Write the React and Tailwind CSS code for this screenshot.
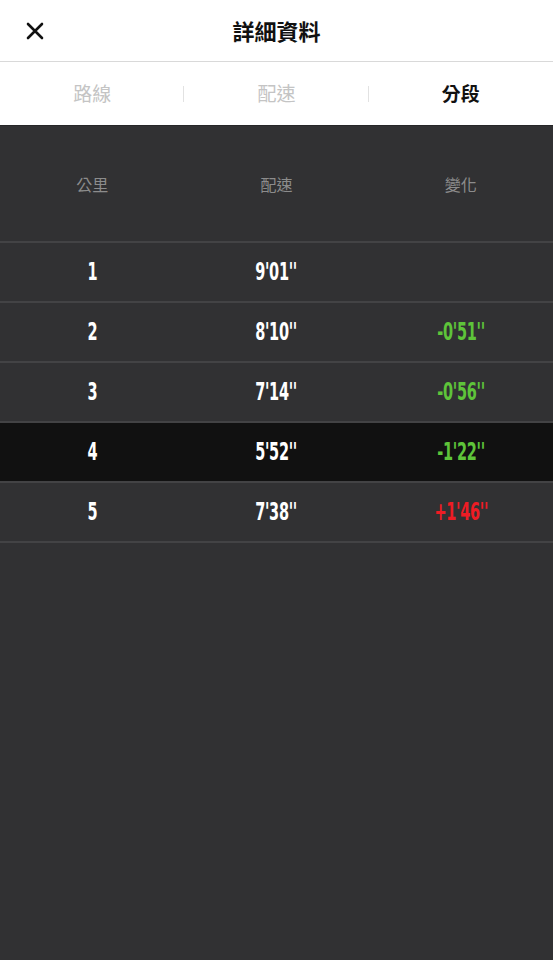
import React from 'react';

const splits = [
    { km: 1, pace: "9'01''", diff: '', tone: '' },
    { km: 2, pace: "8'10''", diff: "-0'51''", tone: 'down' },
    { km: 3, pace: "7'14''", diff: "-0'56''", tone: 'down' },
    { km: 4, pace: "5'52''", diff: "-1'22''", tone: 'down', active: true },
    { km: 5, pace: "7'38''", diff: "+1'46''", tone: 'up' },
];

const cjk = { fontFamily: '"Noto Sans CJK TC", "Noto Sans", sans-serif' };
const num = { fontFamily: '"DejaVu Sans", "Liberation Sans", sans-serif' };

function Num({ children, className = '' }) {
    return (
        <span
            className={`inline-block text-[25px] font-bold leading-none scale-x-[0.58] tracking-[-0.5px] ${className}`}
            style={num}
        >
            {children}
        </span>
    );
}

export default function App() {
    return (
        <div className="w-[553px] h-[960px] flex flex-col bg-[#313133] overflow-hidden" style={cjk}>
            {/* 標題列 */}
            <div className="h-[62px] bg-white flex items-center relative border-b border-[#d9d9d9]">
                <button className="absolute left-[26px] top-[22px] w-[18px] h-[18px]">
                    <svg viewBox="0 0 18 18" width="18" height="18">
                        <path d="M2 2 L16 16 M16 2 L2 16" stroke="#111" strokeWidth="2.6" strokeLinecap="round" />
                    </svg>
                </button>
                <h1 className="w-full text-center text-[22px] font-bold text-[#111]">詳細資料</h1>
            </div>

            {/* 分頁 */}
            <div className="h-[63px] bg-white grid grid-cols-3 items-center">
                <div className="relative flex justify-center text-[19px] text-[#c4c4c4]">
                    路線
                    <span className="absolute right-0 top-1/2 -translate-y-1/2 w-px h-[16px] bg-[#e2e2e2]"></span>
                </div>
                <div className="relative flex justify-center text-[19px] text-[#c4c4c4]">
                    配速
                    <span className="absolute right-0 top-1/2 -translate-y-1/2 w-px h-[16px] bg-[#e2e2e2]"></span>
                </div>
                <div className="flex justify-center text-[19px] text-[#111] font-bold">分段</div>
            </div>

            {/* 表格 */}
            <div className="border-t border-[#262628]">
                <div className="h-[117px] grid grid-cols-3 items-center text-[16px] text-[#8c8c8c] border-b-2 border-[#434345]">
                    <div className="text-center">公里</div>
                    <div className="text-center">配速</div>
                    <div className="text-center">變化</div>
                </div>
                {splits.map(s => (
                    <div
                        key={s.km}
                        className={`h-[60px] grid grid-cols-3 items-center border-b-2 border-[#434345] ${s.active ? 'bg-[#111111]' : ''}`}
                    >
                        <div className="text-center text-white"><Num>{s.km}</Num></div>
                        <div className="text-center text-white"><Num>{s.pace}</Num></div>
                        <div className="text-center">
                            <Num className={s.tone === 'up' ? 'text-[#ee1c24]' : 'text-[#5ec43a]'}>{s.diff}</Num>
                        </div>
                    </div>
                ))}
            </div>
        </div>
    );
}
